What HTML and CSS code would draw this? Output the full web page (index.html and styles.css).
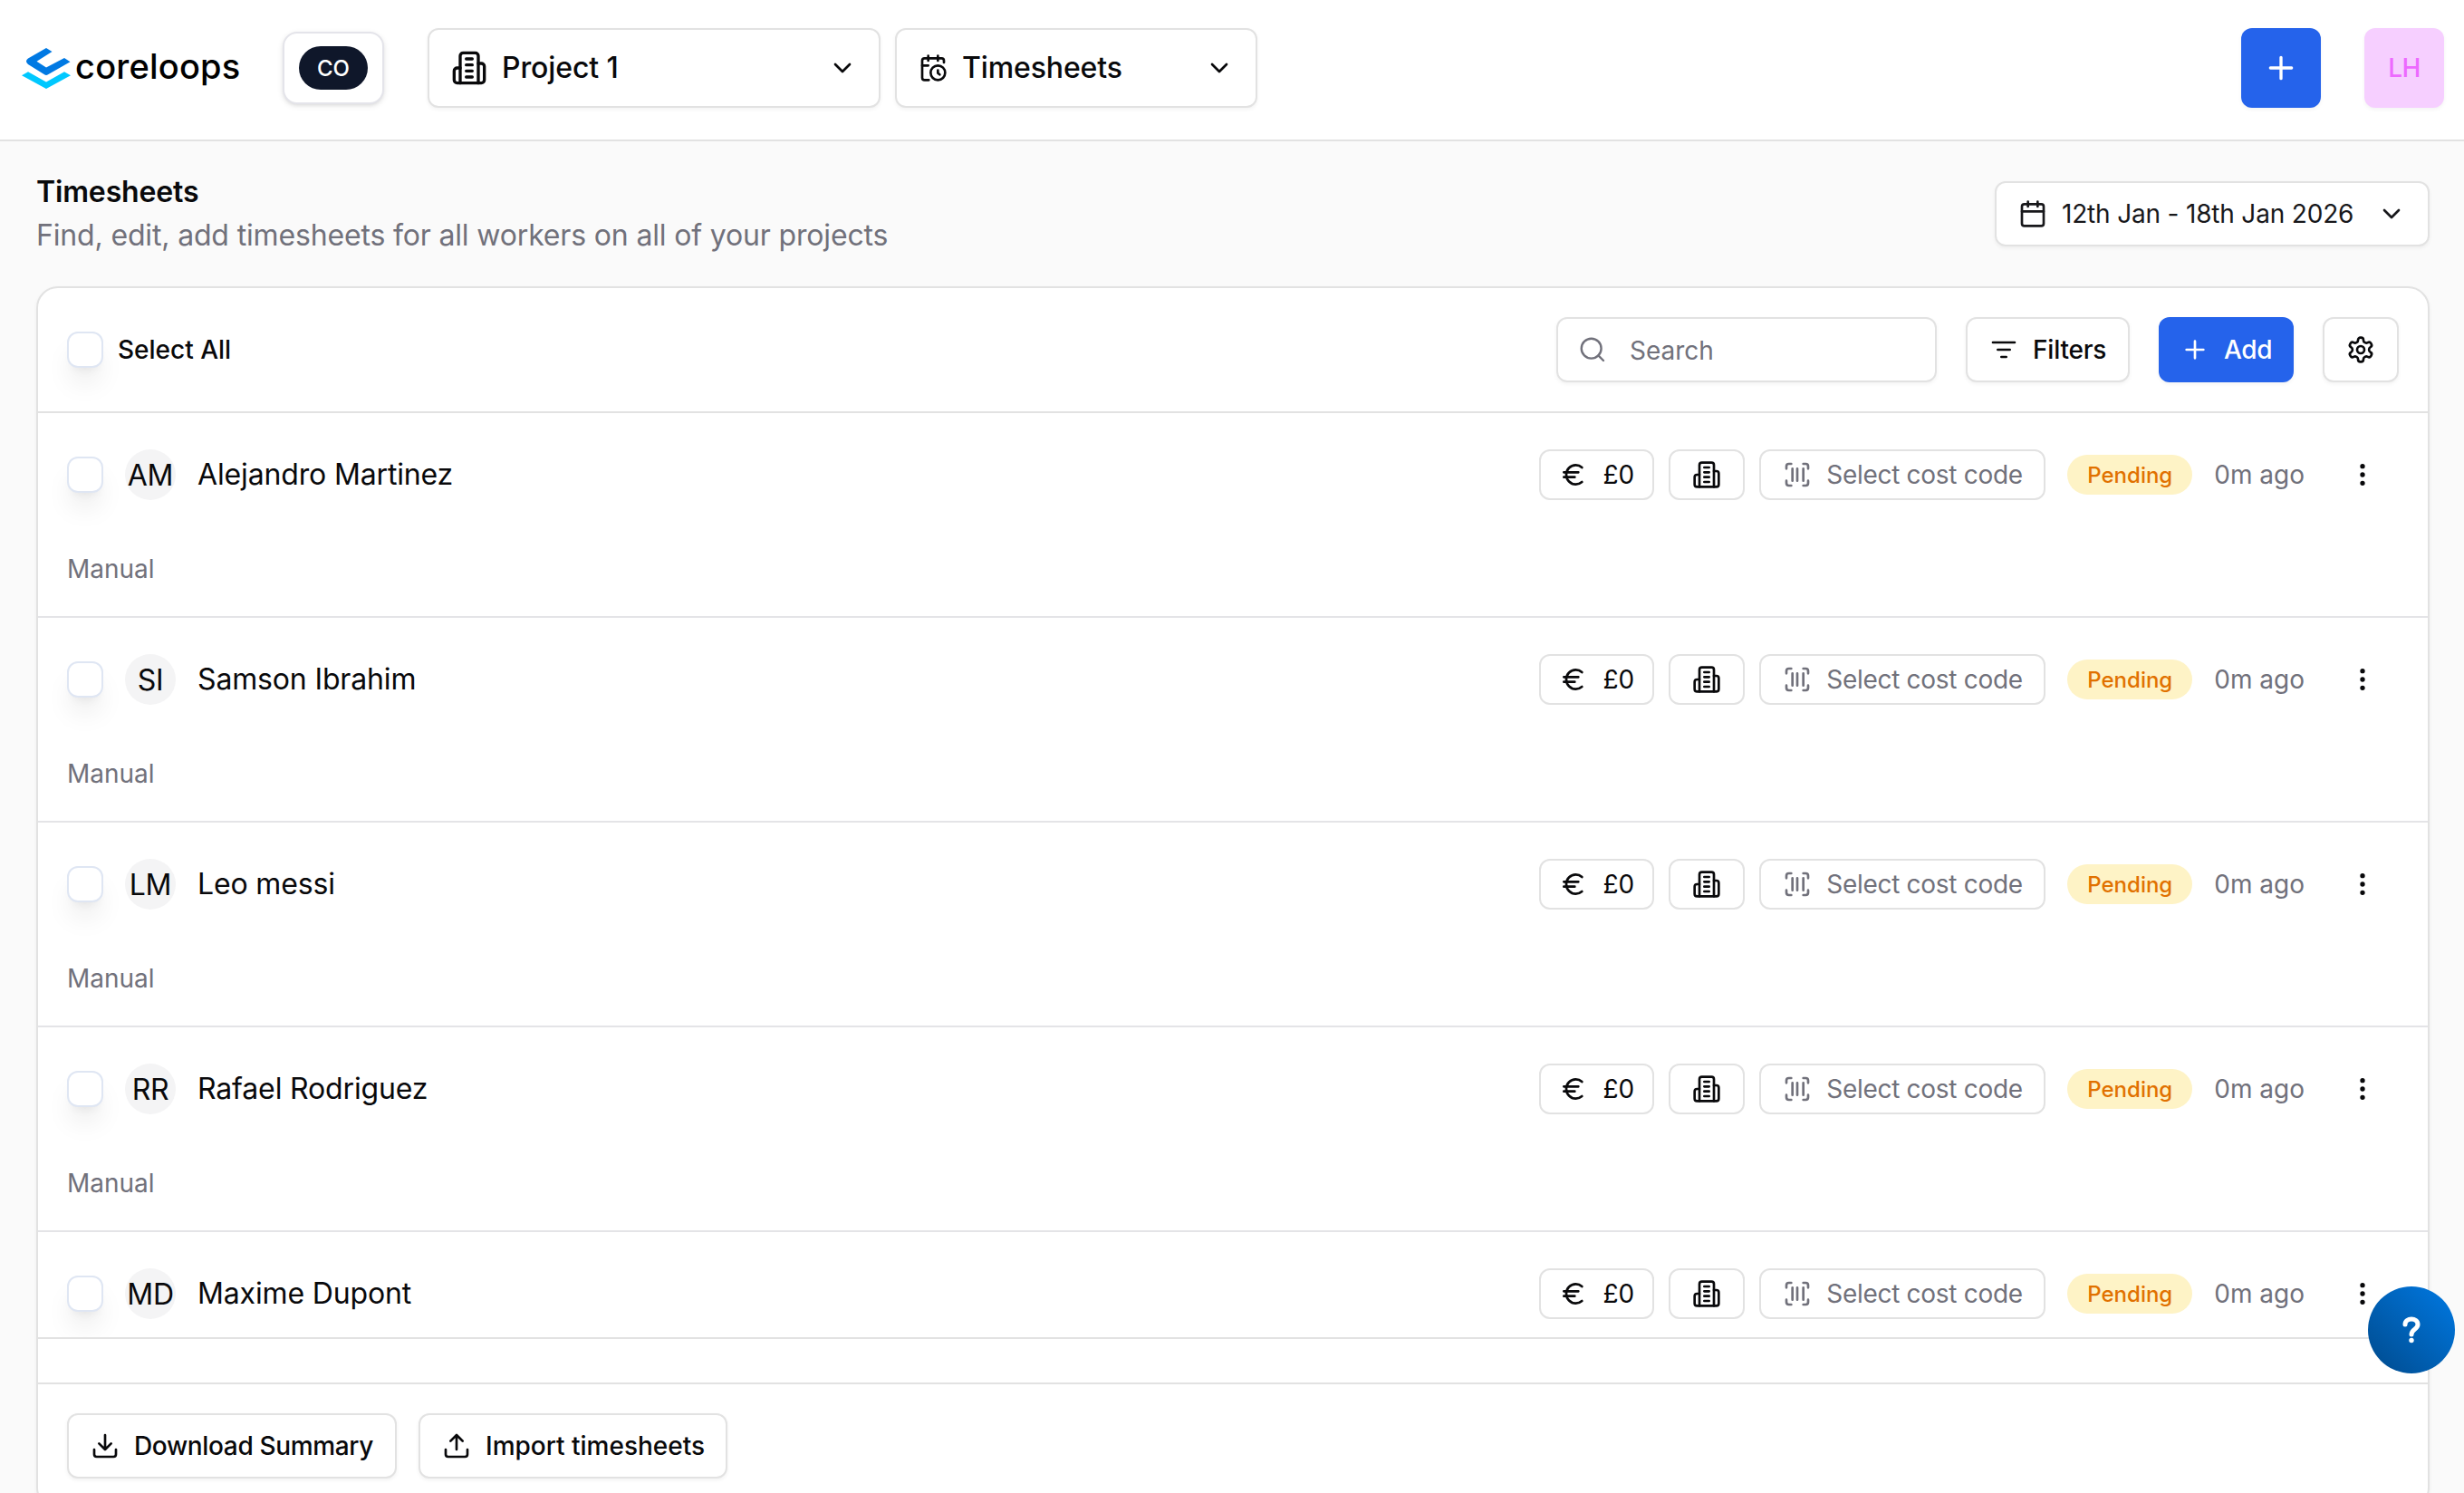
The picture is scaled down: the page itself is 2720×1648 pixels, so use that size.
FILE: index.html
```html
<!DOCTYPE html>
<html lang="en">
<head>
    <meta charset="UTF-8">
    <meta name="viewport" content="width=device-width, initial-scale=1.0">
    <title>Timesheets</title>
    <link rel="stylesheet" href="styles.css">
</head>
<body>
    <!-- icons -->
    <svg class="sprite">
        <symbol id="building" viewBox="0 0 24 24">
            <path d="M6 22V4a2 2 0 0 1 2-2h8a2 2 0 0 1 2 2v18Z"/>
            <path d="M6 12H4a2 2 0 0 0-2 2v6a2 2 0 0 0 2 2h2"/>
            <path d="M18 9h2a2 2 0 0 1 2 2v9a2 2 0 0 1-2 2h-2"/>
            <path d="M10 6h4M10 10h4M10 14h4M10 18h4"/>
        </symbol>
        <symbol id="chevron" viewBox="0 0 24 24"><path d="m6 9 6 6 6-6"/></symbol>
        <symbol id="calendar-clock" viewBox="0 0 24 24">
            <path d="M21 7.5V6a2 2 0 0 0-2-2H5a2 2 0 0 0-2 2v14a2 2 0 0 0 2 2h3.5"/>
            <path d="M16 2v4M8 2v4M3 10h5M17.5 17.5 16 16.3V14"/>
            <circle cx="16" cy="16" r="6"/>
        </symbol>
        <symbol id="calendar" viewBox="0 0 24 24">
            <path d="M8 2v4M16 2v4M3 10h18"/>
            <rect width="18" height="18" x="3" y="4" rx="2"/>
        </symbol>
        <symbol id="plus" viewBox="0 0 24 24"><path d="M5 12h14M12 5v14"/></symbol>
        <symbol id="search" viewBox="0 0 24 24"><circle cx="11" cy="11" r="8.2"/><path d="m21 21-4.2-4.2"/></symbol>
        <symbol id="filter" viewBox="0 0 24 24"><path d="M3 6h18M7 12h10M10 18h4"/></symbol>
        <symbol id="settings" viewBox="0 0 24 24">
            <path d="M12.22 2h-.44a2 2 0 0 0-2 2v.18a2 2 0 0 1-1 1.73l-.43.25a2 2 0 0 1-2 0l-.15-.08a2 2 0 0 0-2.73.73l-.22.38a2 2 0 0 0 .73 2.73l.15.1a2 2 0 0 1 1 1.72v.51a2 2 0 0 1-1 1.74l-.15.09a2 2 0 0 0-.73 2.73l.22.38a2 2 0 0 0 2.73.73l.15-.08a2 2 0 0 1 2 0l.43.25a2 2 0 0 1 1 1.73V20a2 2 0 0 0 2 2h.44a2 2 0 0 0 2-2v-.18a2 2 0 0 1 1-1.73l.43-.25a2 2 0 0 1 2 0l.15.08a2 2 0 0 0 2.73-.73l.22-.39a2 2 0 0 0-.73-2.73l-.15-.08a2 2 0 0 1-1-1.74v-.5a2 2 0 0 1 1-1.74l.15-.09a2 2 0 0 0 .73-2.73l-.22-.38a2 2 0 0 0-2.73-.73l-.15.08a2 2 0 0 1-2 0l-.43-.25a2 2 0 0 1-1-1.73V4a2 2 0 0 0-2-2z"/>
            <circle cx="12" cy="12" r="3"/>
        </symbol>
        <symbol id="euro" viewBox="0 0 24 24">
            <path d="M4 10h12M4 14h9"/>
            <path d="M19 6a7.7 7.7 0 0 0-5.2-2A7.9 7.9 0 0 0 6 12c0 4.4 3.5 8 7.8 8 2 0 3.8-.8 5.2-2"/>
        </symbol>
        <symbol id="barcode" viewBox="0 0 24 24">
            <path d="M3 7V5a2 2 0 0 1 2-2h2M17 3h2a2 2 0 0 1 2 2v2M21 17v2a2 2 0 0 1-2 2h-2M7 21H5a2 2 0 0 1-2-2v-2"/>
            <path d="M8 7v10M12 7v10M17 7v10"/>
        </symbol>
        <symbol id="dots" viewBox="0 0 24 24">
            <circle cx="12" cy="12" r="1"/><circle cx="12" cy="5" r="1"/><circle cx="12" cy="19" r="1"/>
        </symbol>
        <symbol id="download" viewBox="0 0 24 24"><path d="M21 15v4a2 2 0 0 1-2 2H5a2 2 0 0 1-2-2v-4M7 10l5 5 5-5M12 15V3"/></symbol>
        <symbol id="upload" viewBox="0 0 24 24"><path d="M21 15v4a2 2 0 0 1-2 2H5a2 2 0 0 1-2-2v-4M17 8l-5-5-5 5M12 3v12"/></symbol>
    </svg>

    <header class="header">
        <div class="logo">
            <svg class="logo-mark" viewBox="0 0 54 45">
                <path fill="#0079e3" d="M27 0 33.500 4 16.500 14.800 27 21.600 47 11 53.500 15.200 29 29.200Q27 30.600 25 29.200L7 18Q3 14.800 7 11.600Z"/>
                <path fill="#00c8ff" d="M0 30.200 7 26.200 27 37.400 47 26.200 54 30.200 27 45Z"/>
            </svg>
            <span class="logo-text">coreloops</span>
        </div>
        <button class="org"><span>CO</span></button>
        <div class="selects">
            <button class="select project">
                <svg class="icon big"><use href="#building"/></svg>
                <span>Project 1</span>
                <svg class="icon"><use href="#chevron"/></svg>
            </button>
            <button class="select module">
                <svg class="icon"><use href="#calendar-clock"/></svg>
                <span>Timesheets</span>
                <svg class="icon"><use href="#chevron"/></svg>
            </button>
        </div>
        <button class="square new"><svg class="icon big"><use href="#plus"/></svg></button>
        <button class="square user">LH</button>
    </header>

    <main class="main">
        <div class="page-head">
            <div>
                <h1>Timesheets</h1>
                <p>Find, edit, add timesheets for all workers on all of your projects</p>
            </div>
            <button class="button date">
                <svg class="icon"><use href="#calendar"/></svg>
                <span>12th Jan - 18th Jan 2026</span>
                <svg class="icon"><use href="#chevron"/></svg>
            </button>
        </div>

        <div class="card">
            <div class="toolbar">
                <span class="checkbox"></span>
                <span class="select-all">Select All</span>
                <div class="search"><svg class="icon thin"><use href="#search"/></svg><span>Search</span></div>
                <button class="button filters"><svg class="icon"><use href="#filter"/></svg>Filters</button>
                <button class="button primary"><svg class="icon"><use href="#plus"/></svg>Add</button>
                <button class="button"><svg class="icon"><use href="#settings"/></svg></button>
            </div>

            <div class="list">
                <div class="row">
                    <div class="row-top">
                        <span class="checkbox"></span>
                        <span class="avatar">AM</span>
                        <span class="name">Alejandro Martinez</span>
                        <div class="chips">
                            <button class="chip cost"><svg class="icon"><use href="#euro"/></svg>£0</button>
                            <button class="chip"><svg class="icon"><use href="#building"/></svg></button>
                            <button class="chip code"><svg class="icon"><use href="#barcode"/></svg>Select cost code</button>
                        </div>
                        <span class="badge">Pending</span>
                        <span class="ago">0m ago</span>
                        <button class="more"><svg class="icon"><use href="#dots"/></svg></button>
                    </div>
                    <div class="type">Manual</div>
                </div>
                <div class="row">
                    <div class="row-top">
                        <span class="checkbox"></span>
                        <span class="avatar">SI</span>
                        <span class="name">Samson Ibrahim</span>
                        <div class="chips">
                            <button class="chip cost"><svg class="icon"><use href="#euro"/></svg>£0</button>
                            <button class="chip"><svg class="icon"><use href="#building"/></svg></button>
                            <button class="chip code"><svg class="icon"><use href="#barcode"/></svg>Select cost code</button>
                        </div>
                        <span class="badge">Pending</span>
                        <span class="ago">0m ago</span>
                        <button class="more"><svg class="icon"><use href="#dots"/></svg></button>
                    </div>
                    <div class="type">Manual</div>
                </div>
                <div class="row">
                    <div class="row-top">
                        <span class="checkbox"></span>
                        <span class="avatar">LM</span>
                        <span class="name">Leo messi</span>
                        <div class="chips">
                            <button class="chip cost"><svg class="icon"><use href="#euro"/></svg>£0</button>
                            <button class="chip"><svg class="icon"><use href="#building"/></svg></button>
                            <button class="chip code"><svg class="icon"><use href="#barcode"/></svg>Select cost code</button>
                        </div>
                        <span class="badge">Pending</span>
                        <span class="ago">0m ago</span>
                        <button class="more"><svg class="icon"><use href="#dots"/></svg></button>
                    </div>
                    <div class="type">Manual</div>
                </div>
                <div class="row">
                    <div class="row-top">
                        <span class="checkbox"></span>
                        <span class="avatar">RR</span>
                        <span class="name">Rafael Rodriguez</span>
                        <div class="chips">
                            <button class="chip cost"><svg class="icon"><use href="#euro"/></svg>£0</button>
                            <button class="chip"><svg class="icon"><use href="#building"/></svg></button>
                            <button class="chip code"><svg class="icon"><use href="#barcode"/></svg>Select cost code</button>
                        </div>
                        <span class="badge">Pending</span>
                        <span class="ago">0m ago</span>
                        <button class="more"><svg class="icon"><use href="#dots"/></svg></button>
                    </div>
                    <div class="type">Manual</div>
                </div>
                <div class="row">
                    <div class="row-top">
                        <span class="checkbox"></span>
                        <span class="avatar">MD</span>
                        <span class="name">Maxime Dupont</span>
                        <div class="chips">
                            <button class="chip cost"><svg class="icon"><use href="#euro"/></svg>£0</button>
                            <button class="chip"><svg class="icon"><use href="#building"/></svg></button>
                            <button class="chip code"><svg class="icon"><use href="#barcode"/></svg>Select cost code</button>
                        </div>
                        <span class="badge">Pending</span>
                        <span class="ago">0m ago</span>
                        <button class="more"><svg class="icon"><use href="#dots"/></svg></button>
                    </div>
                </div>
            </div>

            <div class="footer">
                <button class="button download"><svg class="icon"><use href="#download"/></svg>Download Summary</button>
                <button class="button import"><svg class="icon"><use href="#upload"/></svg>Import timesheets</button>
            </div>
        </div>
    </main>

    <button class="help">
        <svg viewBox="0 0 20 30">
            <path d="M3 9C3 1 17 1 17 9C17 14.500 10 14 10 20"/>
            <circle cx="10" cy="26.500" r="2.700"/>
        </svg>
    </button>
</body>
</html>
```
FILE: styles.css
```css
* {
    box-sizing: border-box;
    margin: 0;
    padding: 0;
}

body {
    height: 1648px;
    overflow: hidden;
    background-color: #fafafa;
    color: #09090b;
    font-family: Inter, "Liberation Sans", sans-serif;
    font-size: 28px;
    line-height: 40px;
}

button {
    font: inherit;
    color: inherit;
    border: none;
    background: none;
    cursor: pointer;
}

.sprite {
    display: none;
}

.icon {
    width: 32px;
    height: 32px;
    flex: none;
    fill: none;
    stroke: currentColor;
    stroke-width: 2;
    stroke-linecap: round;
    stroke-linejoin: round;
}

.big {
    width: 40px;
    height: 40px;
}

.thin {
    stroke-width: 1.8;
}

/* header */
.header {
    display: flex;
    align-items: center;
    height: 156px;
    padding: 0 22px 4px 24px;
    background-color: white;
    border-bottom: 2px solid #e2e2e2;
}

.logo {
    display: flex;
    align-items: center;
    gap: 5px;
    width: 288px;
}

.logo-mark {
    width: 54px;
    height: 45px;
}

.logo-text {
    font-size: 38px;
    font-weight: 500;
    letter-spacing: 0.2px;
    line-height: 44px;
    margin-top: -5px;
    color: black;
}

.org {
    width: 112px;
    height: 80px;
    margin-right: 48px;
    padding: 14px 16px;
    background-color: white;
    border: 2px solid #e4e4ea;
    border-radius: 16px;
    box-shadow: 0 2px 6px rgba(0, 0, 0, 0.1), 0 2px 4px -2px rgba(0, 0, 0, 0.1);
}

.org span {
    display: block;
    height: 48px;
    border-radius: 24px;
    background-color: #0f172a;
    color: white;
    font-size: 24px;
    font-weight: 500;
    line-height: 50px;
}

.selects {
    display: flex;
    gap: 16px;
    margin-right: auto;
}

.select {
    display: flex;
    align-items: center;
    gap: 16px;
    height: 88px;
    padding: 0 24px;
    background-color: white;
    border: 2px solid #e2e2e2;
    border-radius: 12px;
    box-shadow: 0 2px 4px rgba(0, 0, 0, 0.05);
    font-size: 32px;
    font-weight: 500;
    letter-spacing: -0.12px;
}

.select span {
    flex: 1;
    text-align: left;
}

.project {
    width: 500px;
}

.module {
    width: 400px;
}

.square {
    display: flex;
    align-items: center;
    justify-content: center;
    width: 88px;
    height: 88px;
    border-radius: 12px;
    box-shadow: 0 2px 4px rgba(0, 0, 0, 0.05);
}

.new {
    margin-right: 48px;
    background-color: #2563eb;
    color: white;
}

.user {
    background-color: #f6cfff;
    color: #ed6aff;
    font-weight: 500;
    letter-spacing: -0.5px;
}

/* page */
.main {
    padding: 32px 38px 0 40px;
}

.page-head {
    display: flex;
    justify-content: space-between;
    align-items: center;
    height: 96px;
    margin-bottom: 32px;
}

h1 {
    font-size: 32px;
    font-weight: 600;
    line-height: 48px;
    letter-spacing: -0.15px;
}

.page-head p {
    font-size: 32px;
    line-height: 48px;
    letter-spacing: -0.16px;
    color: #71717b;
}

.button {
    display: flex;
    align-items: center;
    gap: 16px;
    height: 72px;
    padding: 0 24px;
    background-color: white;
    border: 2px solid #e2e2e2;
    border-radius: 12px;
    box-shadow: 0 2px 4px rgba(0, 0, 0, 0.05);
    font-weight: 500;
    white-space: nowrap;
}

.date {
    width: 480px;
    color: #18181b;
    font-weight: 400;
    letter-spacing: -0.18px;
}

.date span {
    flex: 1;
    text-align: left;
}

.filters {
    width: 181px;
    letter-spacing: -0.2px;
}

.primary {
    width: 149px;
    border: none;
    background-color: #2563eb;
    color: white;
    letter-spacing: -0.3px;
}

.download {
    width: 364px;
    letter-spacing: -0.35px;
}

.import {
    width: 341px;
}

.card {
    height: 1350px;
    background-color: white;
    border: 2px solid #e2e2e2;
    border-radius: 24px;
    box-shadow: 0 2px 4px rgba(0, 0, 0, 0.05);
}

.toolbar {
    display: flex;
    align-items: center;
    gap: 32px;
    height: 138px;
    padding: 0 32px;
    border-bottom: 2px solid #e2e2e2;
}

.checkbox {
    width: 40px;
    height: 40px;
    flex: none;
    background-color: white;
    border: 2px solid #dfe6f3;
    border-radius: 12px;
    box-shadow: 0 20px 30px -6px rgba(0, 0, 0, 0.1), 0 8px 12px -8px rgba(0, 0, 0, 0.1);
}

.select-all {
    margin-left: -16px;
    margin-right: auto;
    font-weight: 500;
}

.search {
    display: flex;
    align-items: center;
    gap: 25px;
    width: 420px;
    height: 72px;
    padding: 0 22px;
    border: 2px solid #e2e2e2;
    border-radius: 12px;
    box-shadow: 0 2px 4px rgba(0, 0, 0, 0.05);
    color: #71717b;
}

.search span {
    padding-top: 2px;
}

/* rows */
.list {
    height: 1022px;
    overflow: hidden;
    border-bottom: 2px solid #e2e2e2;
}

.row {
    height: 226px;
    padding: 40px 32px 0;
    border-bottom: 2px solid #e4e4e7;
}

.row-top {
    display: flex;
    align-items: center;
    height: 56px;
}

.avatar {
    display: flex;
    align-items: center;
    justify-content: center;
    width: 56px;
    height: 56px;
    margin: 0 24px;
    padding-top: 2px;
    border-radius: 50%;
    background-color: #f4f4f5;
    font-size: 32px;
    letter-spacing: -0.3px;
}

.name {
    margin-right: auto;
    font-size: 32px;
    letter-spacing: -0.15px;
}

.chips {
    display: flex;
    gap: 16px;
}

.chip {
    display: flex;
    align-items: center;
    gap: 16px;
    height: 56px;
    padding: 0 24px;
    border: 2px solid #e2e2e2;
    border-radius: 12px;
    white-space: nowrap;
}

.cost {
    padding: 0 20px;
}

.code {
    width: 316px;
    letter-spacing: -0.3px;
}

.code,
.ago {
    color: #71717b;
}

.badge {
    height: 44px;
    margin: 0 24px;
    padding: 0 22px;
    border-radius: 22px;
    background-color: #fef3c6;
    color: #e17100;
    font-size: 24px;
    font-weight: 500;
    line-height: 46px;
}

.more {
    display: flex;
    margin-left: 24px;
    padding: 0 24px;
}

.type {
    margin-top: 56px;
    color: #71717b;
}

.footer {
    display: flex;
    gap: 24px;
    margin-top: 48px;
    padding: 32px;
    border-top: 2px solid #e2e2e2;
}

.help {
    position: fixed;
    left: 2614px;
    top: 1420px;
    display: flex;
    align-items: center;
    justify-content: center;
    width: 96px;
    height: 96px;
    border-radius: 50%;
    background-image: linear-gradient(to top right, #004a8c, #0079e3);
}

.help svg {
    width: 20px;
    height: 30px;
    fill: none;
    stroke: white;
    stroke-width: 5;
    stroke-linecap: round;
}

.help circle {
    fill: white;
    stroke: none;
}
```
